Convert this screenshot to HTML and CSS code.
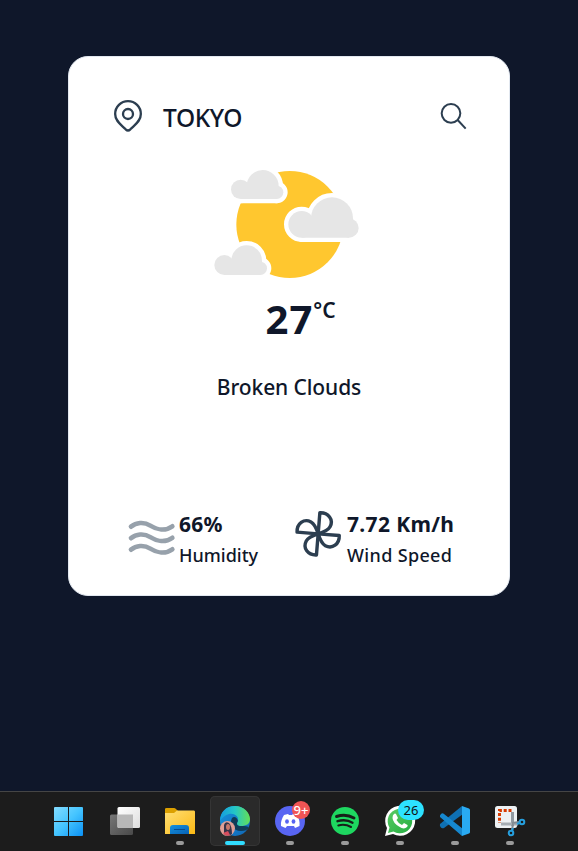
FILE: index.html
```html
<!DOCTYPE html>
<html lang="en">
<head>
<meta charset="utf-8">
<title>Weather</title>
<link rel="stylesheet" href="styles.css">
</head>
<body>
<main>
  <section class="card">
    <header class="location">
      <svg class="pin" viewBox="159 148 90 102" fill="none" stroke="#2c3e50" stroke-width="7"><path d="M197 239C185 226 165.500 216 165.500 193A38.500 38.500 0 0 1 242.500 193C242.500 216 223 226 211 239Q204 246 197 239Z"/><circle cx="204" cy="193" r="15"/></svg>
      <span class="city">TOKYO</span>
      <svg class="search" viewBox="120 156 84 84" fill="none" stroke="#2c3e50" stroke-width="6"><circle cx="153" cy="190" r="28"/><path d="M173 210L197 236"/></svg>
    </header>
    <svg class="sky" viewBox="0 0 540 405">
      <defs>
        <g id="c1"><circle cx="122" cy="103" r="29"/><path d="M140 93A48 48 0 0 1 236 93V112H140Z"/><circle cx="230" cy="112" r="20"/><path d="M122 90H230V132H122Z"/></g>
        <g id="c2"><circle cx="305" cy="208" r="40"/><path d="M333 190A63 63 0 0 1 459 190V219H333Z"/><circle cx="447" cy="219" r="29"/><path d="M305 190H447V248H305Z"/></g>
        <g id="c3"><circle cx="73" cy="330" r="30"/><path d="M94 317A46 46 0 0 1 186 317V340H94Z"/><circle cx="181" cy="340" r="20"/><path d="M73 325H181V360H73Z"/></g>
      </defs>
      <circle cx="269.500" cy="208.500" r="160.500" fill="#ffc72f"/>
      <g fill="#fff" stroke="#fff" stroke-width="26" stroke-linejoin="round"><use href="#c1"/><use href="#c2"/><use href="#c3"/></g>
      <g fill="#e6e6e6"><use href="#c1"/><use href="#c2"/><use href="#c3"/></g>
    </svg>
    <div class="temp"><span class="degrees">27</span><span class="unit">°C</span></div>
    <p class="condition">Broken Clouds</p>
    <div class="stats">
      <svg class="waves" viewBox="50 50 150 126" fill="none" stroke="#97a1ab" stroke-width="14" stroke-linecap="round"><path id="wave" d="M62 79C77 67 100 63 120 76S165 93 186 78"/><use href="#wave" y="34.500"/><use href="#wave" y="69"/></svg>
      <div class="stat humidity"><strong>66%</strong><span>Humidity</span></div>
      <svg class="fan" viewBox="48 30 138 144" fill="none" stroke="#2c3e50" stroke-width="10" stroke-linejoin="round"><path id="blade" d="M116 103L121 41C146 40 162 61 151 82C145 93 132 98 116 103Z"/><use href="#blade" transform="rotate(90 116 103)"/><use href="#blade" transform="rotate(180 116 103)"/><use href="#blade" transform="rotate(270 116 103)"/></svg>
      <div class="stat wind"><strong>7.72 Km/h</strong><span>Wind Speed</span></div>
    </div>
  </section>
</main>
<footer class="taskbar">
  <div class="app">
    <svg viewBox="1 0 50 50"><defs><linearGradient id="win" x2="1" y2="1" gradientUnits="userSpaceOnUse" gradientTransform="translate(10 11) scale(29)"><stop stop-color="#84dcff"/><stop offset=".5" stop-color="#44c4ff"/><stop offset="1" stop-color="#0b91f5"/></linearGradient></defs><path fill="url(#win)" d="M11 11H24V25H10V12Q10 11 11 11ZM25 11H38Q39 11 39 12V25H25ZM10 26H24V40H11Q10 40 10 39ZM25 26H39V39Q39 40 38 40H25Z"/></svg>
  </div>
  <div class="app">
    <svg viewBox="0 0 50 50"><defs><linearGradient id="pane" x2="1" y2="1"><stop stop-color="#fff"/><stop offset="1" stop-color="#ddd"/></linearGradient><linearGradient id="back" x2="1" y2="1"><stop stop-color="#777"/><stop offset="1" stop-color="#494949"/></linearGradient></defs><rect x="10" y="18.500" width="23" height="20.500" rx="1.500" fill="url(#back)"/><rect x="17.500" y="11" width="22.500" height="21" rx="1.500" fill="url(#pane)"/><path d="M17.500 18.500H33V32H19Q17.500 32 17.500 30.500Z" fill="#b8b8b8"/></svg>
  </div>
  <div class="app open">
    <svg viewBox="0 0 50 50"><defs><linearGradient id="folder" x2="1" y2="1"><stop stop-color="#ffdf75"/><stop offset="1" stop-color="#fbb914"/></linearGradient><linearGradient id="tray" y2="1"><stop stop-color="#1490df"/><stop offset="1" stop-color="#0862b4"/></linearGradient></defs><path d="M10 17V13Q10 12 11.500 12H19Q20 12 21 13L23 15H38Q40 15 40 17Z" fill="#dca000"/><path d="M10 17H19L22 14.500H39Q40 14.500 40 16V38H10Z" fill="url(#folder)"/><path d="M15 38V32Q15 29 18 29H31Q34 29 34 32V38Z" fill="url(#tray)"/><path d="M19 33.500H30" stroke="#064b91"/></svg>
  </div>
  <div class="app open active">
    <svg viewBox="0 0 50 50"><defs><linearGradient id="edgeTop" x2="1"><stop stop-color="#159ce1"/><stop offset=".5" stop-color="#24c6c6"/><stop offset="1" stop-color="#65df55"/></linearGradient><linearGradient id="edgeLow" x2="1" y2="1"><stop stop-color="#1595df"/><stop offset="1" stop-color="#1266b4"/></linearGradient></defs><circle cx="25" cy="25" r="15" fill="url(#edgeLow)"/><path d="M10 25C10 16 16 10 25 10C34 10 40 17 40 23C40 28 36 30 31 30C27 30 26 28 28 25C29 20 24 17 19 18C15 19 12 22 10 25Z" fill="url(#edgeTop)"/><path d="M22 22C19 28 23 35 31 35C35 35 37 34 39 32C38 30 35 30 31 30C27 30 26 28 28 25C27 21 24 20 22 22Z" fill="#103b57"/><circle cx="17.500" cy="32.500" r="7.500" fill="#df9f96"/><path d="M14 38V29Q15 25 19 27Q22 30 22 38Q18 41 14 38Z" fill="#353349"/><ellipse cx="18" cy="31" rx="2" ry="3" fill="#c7776b"/><path d="M13 37L18 35L20 39Q16 41 13 37Z" fill="#d94d5d"/></svg>
  </div>
  <div class="app open">
    <svg viewBox="0 0 50 50"><circle cx="25" cy="25" r="15" fill="#5865f2"/><path d="M19 19L23 18L24 19H27L28 18L32 19C34 22 35 26 34.500 30L30 32L29 30H22L20.500 32L16 30C15.500 26 17 22 19 19Z" fill="#fff"/><ellipse cx="22" cy="25.500" rx="1.900" ry="2.300" fill="#5865f2"/><ellipse cx="28.500" cy="25.500" rx="1.900" ry="2.300" fill="#5865f2"/></svg>
    <span class="badge alerts">9+</span>
  </div>
  <div class="app open">
    <svg viewBox="0 0 50 50"><circle cx="25" cy="25" r="14" fill="#1ed760"/><g fill="none" stroke="#171f19" stroke-linecap="round"><path d="M16.500 20.500Q26 17.500 34 22" stroke-width="2.900"/><path d="M17.500 25.200Q26 22.800 32.500 26.700" stroke-width="2.400"/><path d="M18.300 29.500Q25 27.700 31 31" stroke-width="2"/></g></svg>
  </div>
  <div class="app open">
    <svg viewBox="0 0 50 50"><defs><linearGradient id="phone" y2="1"><stop stop-color="#5acb65"/><stop offset="1" stop-color="#24ae41"/></linearGradient></defs><path d="M10 40L12 32A15 15 0 1 1 18 38Z" fill="#fff"/><path d="M13 37L14.500 31.500A12.300 12.300 0 1 1 18.500 35.500Z" fill="url(#phone)"/><path d="M19 18Q20 17 21 18L23 22L21.500 24Q23 27 27 29L29 27L32.500 29Q33 30 32 31Q29 34 24 30.500Q18 27 17.500 22Q17.500 19 19 18Z" fill="#fff"/></svg>
    <span class="badge messages">26</span>
  </div>
  <div class="app open">
    <svg viewBox="0 0 50 50"><path d="M10 28L32 10L33 18L14 32Q12 33 10.500 31Q9.500 29.500 10 28Z" fill="#0f70b3"/><path d="M10 21Q9.500 19.500 11 18Q12.500 16.500 14 18L33 33L32 40Z" fill="#1688cf"/><path d="M32 10L39 12.500Q40 13 40 14V36Q40 37 39 37.500L32 40Z" fill="#29aaf2"/></svg>
  </div>
  <div class="app open">
    <svg viewBox="0 0 50 50"><rect x="10" y="10" width="22" height="22" rx="2.500" fill="#edf1f3"/><path d="M26.500 14.500H14.500V27" fill="none" stroke="#d83b01" stroke-width="3" stroke-dasharray="3 1.800"/><path d="M27.500 16V30" stroke="#929aa1" stroke-width="3"/><path d="M16 28H33" stroke="#a6adb3" stroke-width="3"/><path d="M27 27L34 26M28 28L27 34" stroke="#838b92" stroke-width="2"/><g fill="none" stroke="#269fde" stroke-width="2"><circle cx="37" cy="26" r="2.300"/><circle cx="26" cy="37" r="2.300"/><path d="M34.500 27L32 28M27 35L28 32"/></g></svg>
  </div>
</footer>
</body>
</html>
```
FILE: styles.css
```css
* { box-sizing: border-box; }
body {
  margin: 0;
  height: 851px;
  display: flex;
  flex-direction: column;
  overflow: hidden;
  background: #0f172a;
  color: #0f172a;
  font-family: "Noto Sans", "Open Sans", sans-serif;
}
svg { display: block; flex: none; }
main { flex: 1; padding: 56px 68px 0; }
.card {
  width: 442px;
  height: 540px;
  padding-top: 41px;
  border: 1px solid #e2e8f0;
  border-radius: 20px;
  background: #fff;
  display: flex;
  flex-direction: column;
}
.location { display: flex; height: 40px; padding: 0 41px 0 44px; }
.pin { width: 30px; height: 34px; margin-top: 1px; }
.city { margin-left: 20px; font-size: 24.500px; line-height: 40px; font-weight: 500; letter-spacing: -0.4px; }
.search { width: 28px; height: 28px; margin: 4px 0 0 auto; }
.sky { width: 180px; height: 135px; margin: 17px 0 0 131px; }
.temp { display: flex; height: 60px; margin-left: 196.500px; }
.degrees { font-size: 40px; line-height: 58px; font-weight: 700; letter-spacing: 1px; }
.unit { font-size: 21px; line-height: 41px; font-weight: 600; }
.condition { margin: 21px 0 0; text-align: center; font-size: 21px; line-height: 32px; font-weight: 500; letter-spacing: -0.1px; }
.stats { display: flex; margin-top: 105px; }
.waves { width: 50px; height: 42px; margin: 9px 0 0 58px; }
.stat { display: flex; flex-direction: column; white-space: nowrap; }
.stat strong { font-size: 21px; line-height: 32px; font-weight: 700; letter-spacing: 0.2px; }
.stat span { font-size: 18px; line-height: 30px; font-weight: 500; }
.humidity { width: 116px; margin-left: 2px; }
.fan { width: 47px; height: 49px; margin-top: 1px; }
.wind { margin-left: 5px; }
.wind strong { letter-spacing: 0.35px; }
.wind span { letter-spacing: 0.35px; }
.taskbar {
  height: 60px;
  padding: 4px 0 0 45px;
  border-top: 1px solid #454545;
  background: #1c1c1c;
  display: flex;
  gap: 5px;
}
.app { position: relative; width: 50px; height: 50px; flex: none; }
.app svg { width: 50px; height: 50px; }
.app.active { background: #2a2a2a; border-radius: 5px; box-shadow: inset 0 0 0 1px #353535; }
.app.open::after {
  content: "";
  position: absolute;
  left: 21px;
  bottom: 1px;
  width: 8px;
  height: 4px;
  border-radius: 2px;
  background: #9a9a9a;
}
.app.active::after { left: 15px; width: 20px; background: #31dcff; }
.badge { position: absolute; display: flex; align-items: center; justify-content: center; }
.alerts { left: 27px; top: 5px; width: 18px; height: 18px; border-radius: 9px; background: #f05454; color: #fff; font-size: 13px; font-weight: 500; }
.messages { left: 23px; top: 4px; width: 26px; height: 20px; border-radius: 10px; background: #2de2ff; color: #111; font-size: 13px; }
```
